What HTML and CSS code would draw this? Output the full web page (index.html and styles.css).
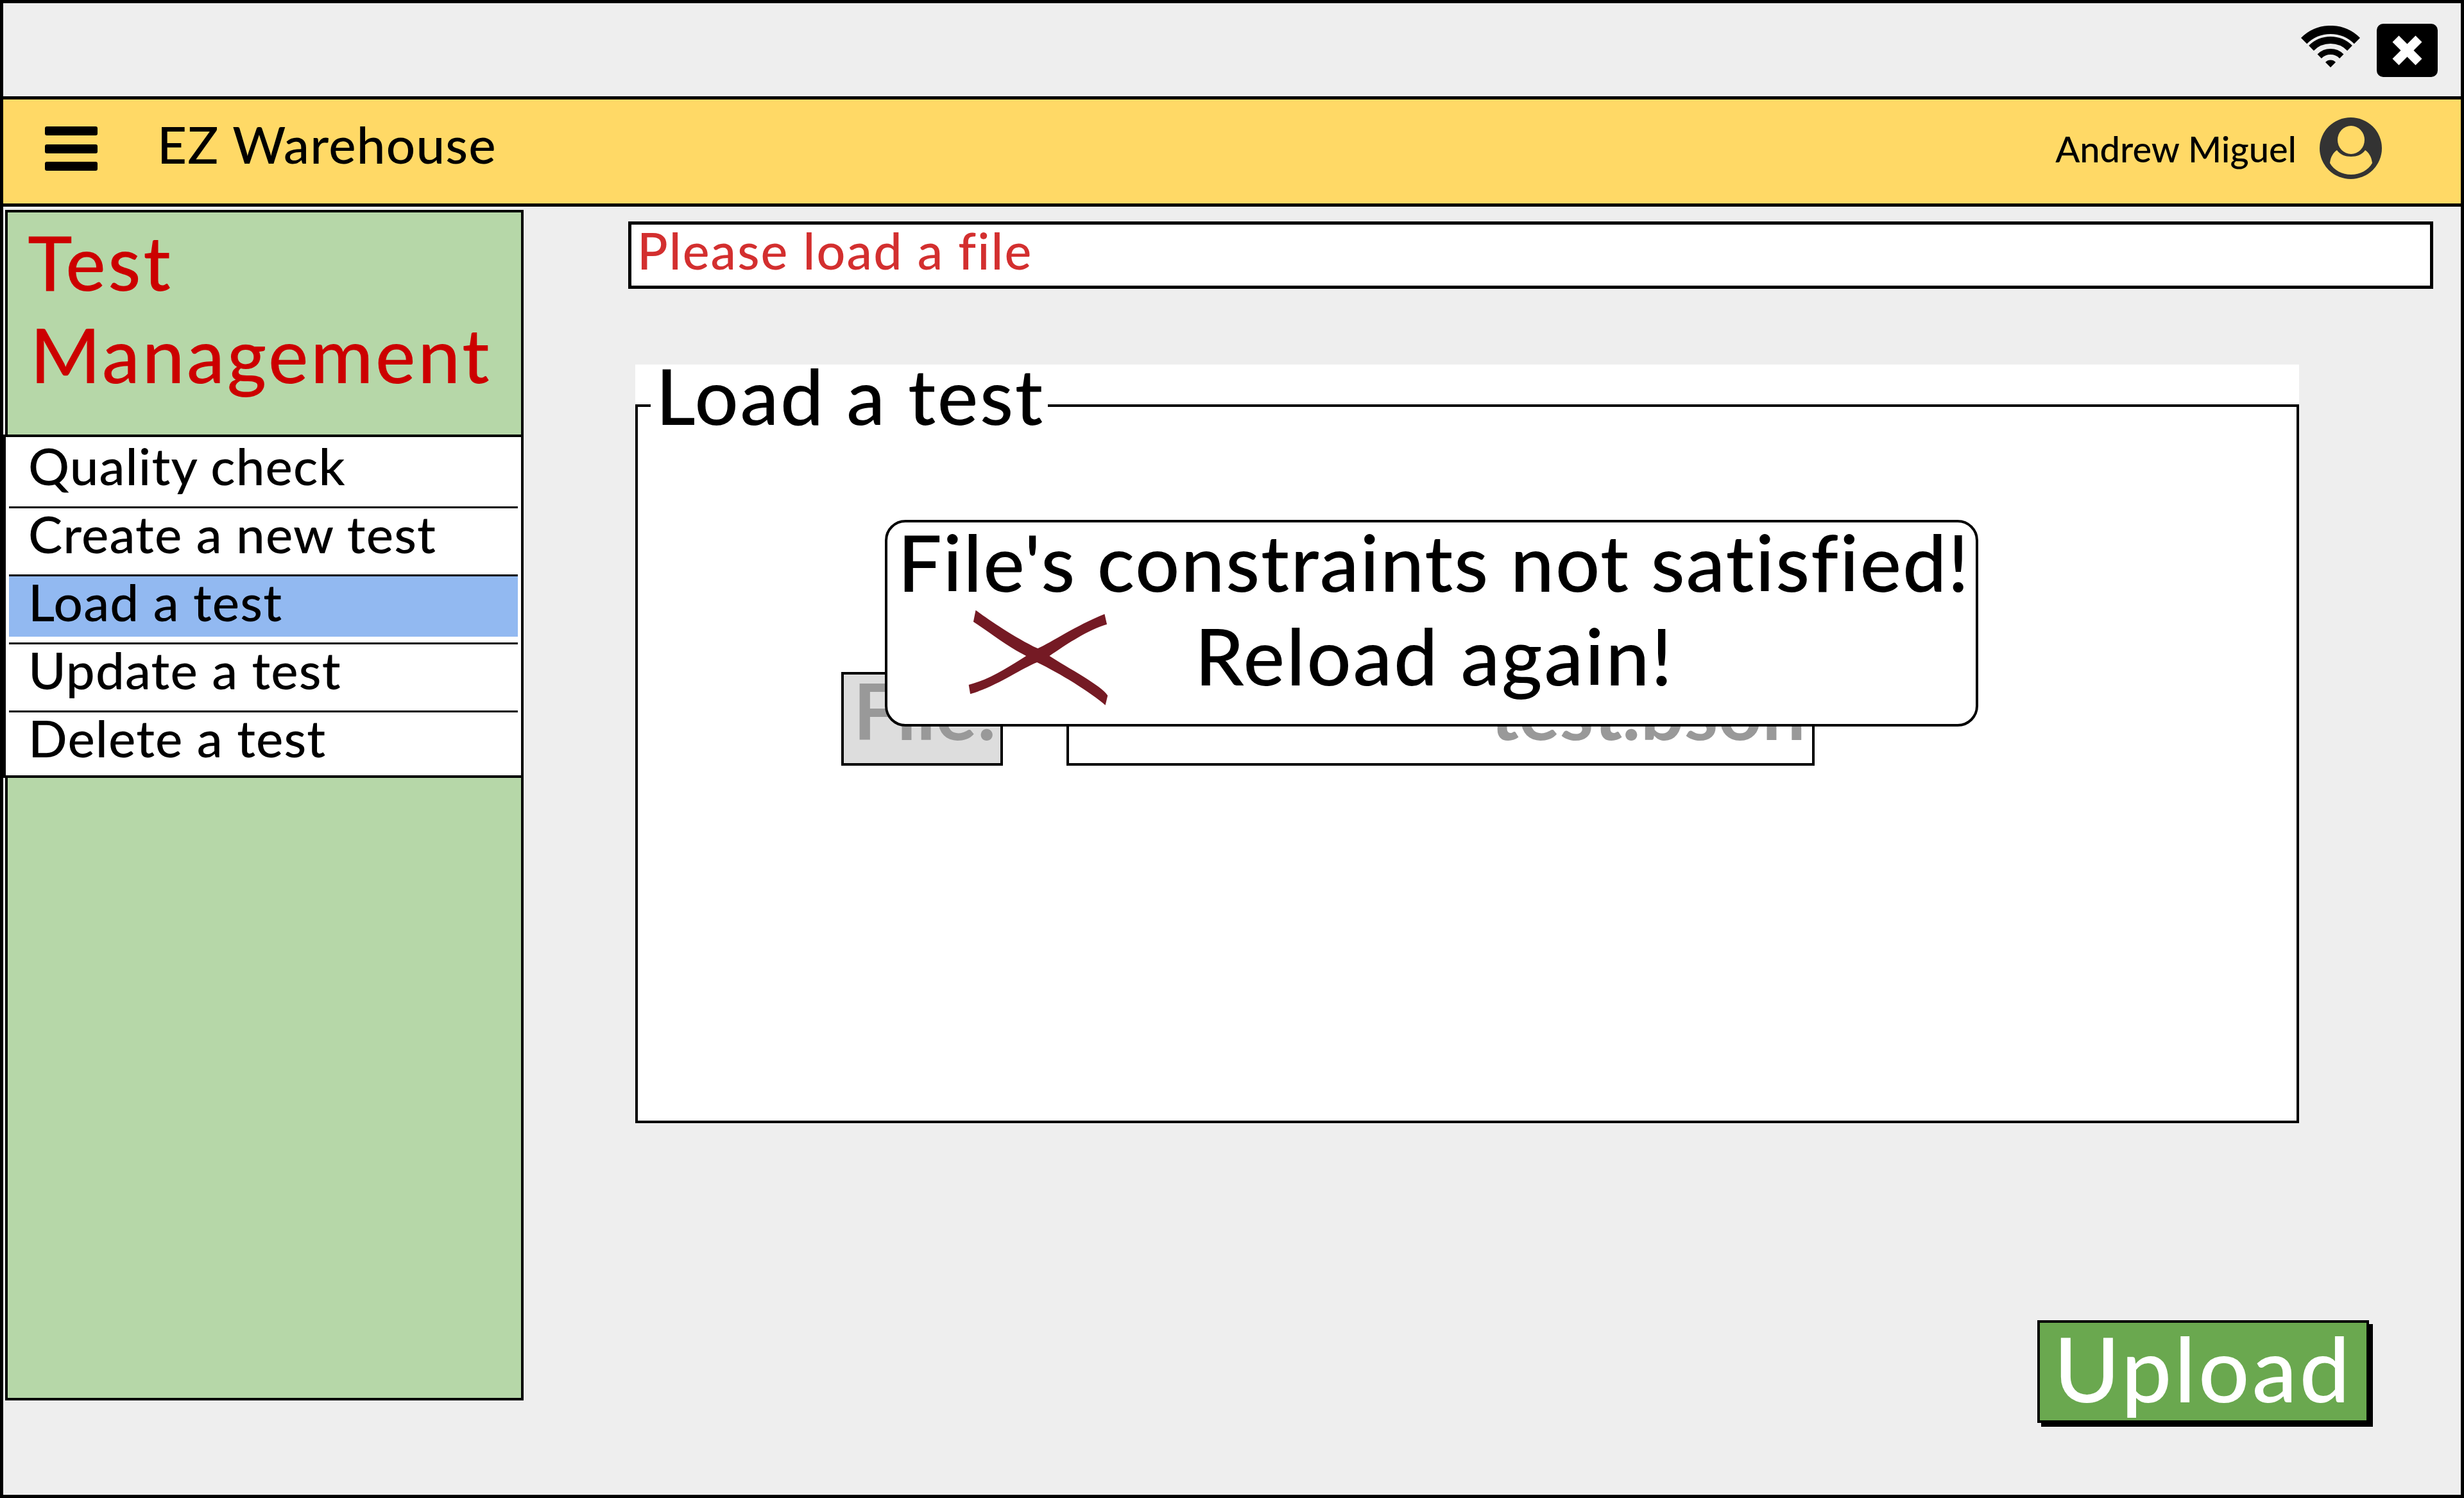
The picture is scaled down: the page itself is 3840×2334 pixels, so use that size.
FILE: index.html
```html
<!DOCTYPE html>
<html lang="en">
<head>
    <meta charset="UTF-8">
    <meta name="viewport" content="width=device-width, initial-scale=1.0">
    <title>EZ Warehouse</title>
    <link rel="stylesheet" href="styles.css">
</head>
<body>

<div class="window">
    <div class="titlebar">
        <svg class="wifi" viewBox="0 0 92 65" width="92" height="65">
            <path d="M4.6 23.6 A58.5 58.5 0 0 1 87.4 23.6" fill="none" stroke="#000" stroke-width="13"/>
            <path d="M16 35 A42.5 42.5 0 0 1 76 35" fill="none" stroke="#000" stroke-width="11"/>
            <path d="M28.7 47.7 A24.5 24.5 0 0 1 63.3 47.7" fill="none" stroke="#000" stroke-width="9"/>
            <path d="M38 57 A11 11 0 0 1 54 57 L46 65 Z" fill="#000"/>
        </svg>
        <svg class="close" viewBox="0 0 95 83" width="95" height="83">
            <rect width="95" height="83" rx="10" fill="#000"/>
            <path d="M24.5 28.5 L34.5 18.5 L47.5 31.5 L60.5 18.5 L70.5 28.5 L57.5 41.5 L70.5 54.5 L60.5 64.5 L47.5 51.5 L34.5 64.5 L24.5 54.5 L37.5 41.5 Z" fill="#fff"/>
        </svg>
    </div>

    <header class="appbar">
        <svg class="burger" viewBox="0 0 82 69" width="82" height="69">
            <rect y="0" width="82" height="14" rx="3" fill="#000"/>
            <rect y="28" width="82" height="14" rx="3" fill="#000"/>
            <rect y="55" width="82" height="14" rx="3" fill="#000"/>
        </svg>
        <span class="app-name">EZ Warehouse</span>
        <span class="user-name">Andrew Miguel</span>
        <svg class="avatar" viewBox="0 0 97 96" width="97" height="96">
            <ellipse cx="48.5" cy="48" rx="48.5" ry="48" fill="#333"/>
            <ellipse cx="49" cy="35" rx="21" ry="22" fill="#ffd966"/>
            <path d="M16 71 C17 61 22 54 27 51 C32 58 40 61 49 61 C58 61 66 58 71 51 C76 54 81 61 82 71 C76 82 63 89 49 89 C35 89 22 82 16 71 Z" fill="#ffd966"/>
        </svg>
    </header>

    <div class="main">
        <aside class="sidebar">
            <h1 class="side-title">
                <span class="side-title-a">Test</span>
                <span class="side-title-b">Management</span>
            </h1>
            <ul class="menu">
                <li class="menu-item">Quality check</li>
                <li class="menu-item">Create a new test</li>
                <li class="menu-item active">Load a test</li>
                <li class="menu-item">Update a test</li>
                <li class="menu-item last">Delete a test</li>
            </ul>
        </aside>

        <div class="content">
            <div class="message">Please load a file</div>

            <div class="panel">
                <fieldset class="load-box">
                    <legend>Load a test</legend>
                    <div class="file-row">
                        <span class="file-label">File:</span>
                        <span class="file-input">test.bson</span>
                    </div>
                </fieldset>

                <div class="dialog">
                    <div class="dialog-title">File's constraints not satisfied!</div>
                    <div class="dialog-row">
                        <svg class="cross" viewBox="205 565 200 465" width="242" height="155" preserveAspectRatio="none">
                            <path d="M222 576 C235 610 270 700 302 755 C320 725 350 650 388 594 L391 642 C365 670 335 745 317 790 C340 845 385 930 392 975 L389 1020 C370 960 330 870 301 820 C280 850 250 930 215 968 L213 925 C240 900 265 840 287 790 C265 750 240 680 219 630 Z" fill="#751a24"/>
                        </svg>
                        <span class="dialog-text">Reload again!</span>
                    </div>
                </div>
            </div>

            <button class="upload" type="button">Upload</button>
        </div>
    </div>
</div>

</body>
</html>
```

FILE: styles.css
```css
* { margin: 0; padding: 0; box-sizing: border-box; }
body { background: #eee; color: #000; font-family: 'Lato', 'Liberation Sans', sans-serif; font-weight: 500; overflow: hidden; }

.window {
    width: 3840px;
    height: 2334px;
    border: 5px solid #000;
    background: #eee;
    display: flex;
    flex-direction: column;
}

/* top strip */
.titlebar {
    height: 145px;
    flex: none;
    display: flex;
    justify-content: flex-end;
    align-items: flex-start;
    gap: 26px;
    padding: 32px 36px 0 0;
}
.wifi { margin-top: 3px; }

.appbar {
    height: 172px;
    flex: none;
    display: flex;
    align-items: center;
    background: #ffd966;
    border-top: 5px solid #000;
    border-bottom: 5px solid #000;
    padding: 0 123px 10px 65px;
}
.app-name { font-size: 80px; letter-spacing: 1.2px; line-height: 96px; padding-bottom: 14px; margin-left: 93px; white-space: nowrap; }
.user-name { font-size: 56px; margin-left: auto; white-space: nowrap; }
.avatar { margin-left: 36px; }

.main { flex: 1; display: flex; align-items: flex-start; }

/* left column */
.sidebar {
    width: 808px;
    height: 1855px;
    flex: none;
    margin: 5px 0 0 3px;
    background: #b6d7a8;
    border: 4px solid #000;
}
.side-title {
    font-size: 118px;
    font-weight: 500;
    line-height: 144px;
    color: #cc0000;
    padding: 5px 0 53px;
    white-space: nowrap;
}
.side-title span { display: block; letter-spacing: 3.6px; }
.side-title-a { padding-left: 31px; }
.side-title-b { padding-left: 35px; }

.menu {
    list-style: none;
    margin-left: -7px;
    margin-right: -4px;
    background: #fff;
    border: 4px solid #000;
    padding: 5px 5px 0;
    height: 535px;
}
.menu-item {
    font-size: 80px;
    letter-spacing: 1.1px;
    line-height: 78px;
    padding: 0 0 25px 30px;
    border-bottom: 3px solid #000;
    white-space: nowrap;
}
.menu-item.active { background: linear-gradient(#92b9f1, #92b9f1) no-repeat top / 100% 94px; }
.menu-item.last { border-bottom: none; padding-bottom: 0; }

/* right column */
.content { flex: 1; display: flex; flex-direction: column; margin: 0 43px 0 163px; padding-top: 23px; }

.message {
    height: 105px;
    flex: none;
    background: #fff;
    border: 5px solid #000;
    color: #d32f2f;
    font-size: 79px;
    letter-spacing: 2.1px;
    line-height: 80px;
    padding-left: 9px;
}

.panel {
    position: relative;
    width: 2593px;
    height: 1182px;
    flex: none;
    margin: 118px 0 0 11px;
    background: #fff;
}

.load-box { height: 100%; border: 4px solid #000; padding: 0; }
.load-box legend {
    font-size: 120px;
    letter-spacing: 2.7px;
    line-height: 96px;
    margin-left: 20px;
    padding: 0 5px 32px 8px;
}

.file-row { display: flex; gap: 99px; padding: 351px 0 0 317px; }
.file-label, .file-input {
    height: 146px;
    border: 4px solid #000;
    color: #999;
    font-size: 120px;
    font-weight: 700;
    line-height: 112px;
}
.file-label { width: 252px; background: #ddd; padding-left: 15px; }
.file-input { width: 1166px; background: #fff; text-align: right; padding-right: 10px; }

/* error popup over the form */
.dialog {
    position: absolute;
    left: 389px;
    top: 242px;
    width: 1704px;
    height: 322px;
    background: #fff;
    border: 4px solid #000;
    border-radius: 32px;
    padding-top: 2px;
}
.dialog-title { font-size: 122px; letter-spacing: 1.85px; line-height: 118px; padding-left: 16px; white-space: nowrap; }
.dialog-row { display: flex; align-items: flex-start; margin-top: 22px; padding-left: 117px; }
.dialog-text { font-size: 122px; letter-spacing: 2.6px; line-height: 118px; margin: 6px 0 0 120px; white-space: nowrap; }
.cross { flex: none; margin-top: -9px; }

.upload {
    align-self: flex-end;
    width: 517px;
    height: 160px;
    margin: 307px 100px 0 0;
    padding-bottom: 24px;
    background: #6aa84f;
    border: 4px solid #000;
    box-shadow: 6px 6px 0 #000;
    color: #fff;
    font-family: inherit;
    font-weight: 500;
    font-size: 140px;
    letter-spacing: 4px;
    line-height: 1;
}
```
